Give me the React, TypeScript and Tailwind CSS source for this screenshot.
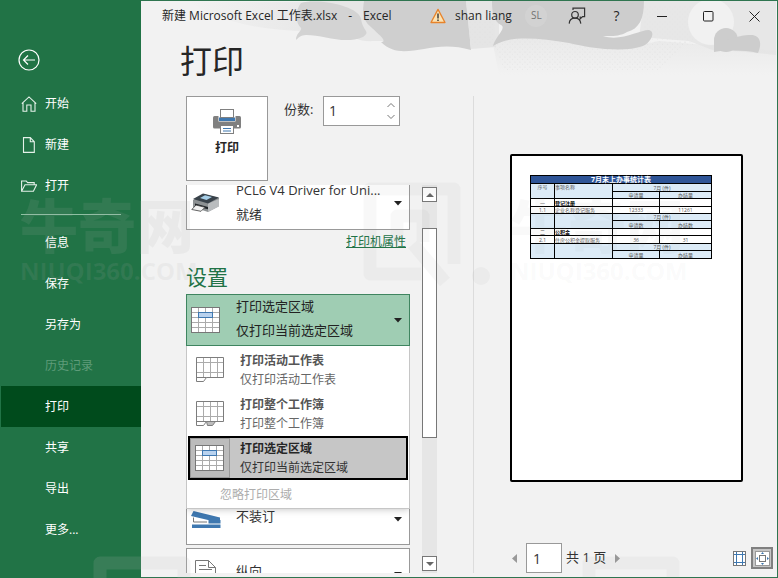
import React from "react";

const FONT = "font-['Open_Sans','Noto_Sans_CJK_SC',sans-serif]";

function HomeIcon() {
  return (
    <svg width="16" height="16" viewBox="0 0 16 16" fill="none" stroke="#e4f1e9" strokeWidth="1.1">
      <path d="M0.8 7.6 8 0.9l7.2 6.7M2 6.6v8.6h3.8V9h4.2v6.2H14V6.6" />
    </svg>
  );
}

function FileIcon() {
  return (
    <svg width="16" height="16" viewBox="0 0 16 16" fill="none" stroke="#e4f1e9" strokeWidth="1.1">
      <path d="M2.5.6h6.8l4 4.2v10.6H2.5zM9.3.6v4.2h4" />
    </svg>
  );
}

function FolderIcon() {
  return (
    <svg width="16" height="16" viewBox="0 0 16 16" fill="none" stroke="#e4f1e9" strokeWidth="1.1">
      <path d="M.6 13.2V3h4.6l1.4 1.6h6.6v2.2M.6 13.2 4 6.8h11.6l-3.2 6.4z" />
    </svg>
  );
}

function NavItem({ label, icon, active, disabled }: { label: string; icon?: React.ReactNode; active?: boolean; disabled?: boolean }) {
  const tone = active ? "bg-[#004b1c] text-white" : disabled ? "text-[#5f9c7a]" : "text-white";
  return (
    <button type="button" disabled={disabled} className={`flex h-[41px] w-full items-center pl-5 text-xs ${tone}`}>
      <span className="mr-2 flex w-4 justify-center">{icon}</span>
      {label}
    </button>
  );
}

function Sidebar() {
  return (
    <nav className="flex w-[141px] shrink-0 flex-col bg-[#217346] pt-px pl-px">
      <div className="flex h-[82px] items-end pb-3 pl-4">
        <button type="button" aria-label="返回">
          <svg width="23" height="22" viewBox="-1 0 23 22" fill="none" stroke="#fff" strokeWidth="1.2">
            <circle cx="11" cy="11" r="10" />
            <path d="M17 11H5.5M10 6.5 5.5 11l4.5 4.5" />
          </svg>
        </button>
      </div>
      <NavItem label="开始" icon={<HomeIcon />} />
      <NavItem label="新建" icon={<FileIcon />} />
      <NavItem label="打开" icon={<FolderIcon />} />
      <div className="flex h-4 items-center pr-5 pl-5">
        <hr className="w-full border-[#8fc0a3]" />
      </div>
      <NavItem label="信息" />
      <NavItem label="保存" />
      <NavItem label="另存为" />
      <NavItem label="历史记录" disabled />
      <NavItem label="打印" active />
      <NavItem label="共享" />
      <NavItem label="导出" />
      <NavItem label="更多..." />
    </nav>
  );
}

function HeaderArt() {
  return (
    <svg className="pointer-events-none absolute top-0 right-0" width="637" height="80" viewBox="141 0 637 80" aria-hidden="true">
      <defs>
        <pattern id="dots" width="5" height="5" patternUnits="userSpaceOnUse">
          <circle cx="1" cy="1" r="0.6" fill="#dadada" />
          <circle cx="3.5" cy="3.2" r="0.5" fill="#e0e0e0" />
        </pattern>
        <linearGradient id="fade" x1="0" y1="0" x2="0" y2="1">
          <stop offset="0" stopColor="#e3e3e3" />
          <stop offset="1" stopColor="#f2f2f2" />
        </linearGradient>
        <linearGradient id="side" x1="0" y1="0" x2="1" y2="0">
          <stop offset="0" stopColor="#f2f2f2" />
          <stop offset="1" stopColor="#dedede" />
        </linearGradient>
      </defs>
      <path d="M190 1H310V30C260 30 220 20 190 1z" fill="url(#side)" opacity=".5" />
      <path d="M310 0H500V40H375C350 42 340 25 310 0z" fill="#e6e6e6" />
      <path d="M302 2C320-3 360 5 362 18S372 30 364 36C345 44 325 34 307 34 302 34 299 37 297 39 297 32 303 30 302 27 295 20 297 8 302 2z" fill="#d3d3d3" />
      <path d="M365 0H467L472 49C455 44 440 45 425 48 410 50 395 54 382 41 390 41 378 32 372 26 362 18 364 8 365 0z" fill="#cfcfcf" />
      <path d="M493 38C540 30 610 54 660 40L777 50V74H500z" fill="url(#fade)" opacity=".6" />
      <path d="M467 0h27l3 46-25 2z" fill="#e5e5e5" />
      <path d="M493 38C520 30 600 50 690 40L660 70H505z" fill="url(#dots)" opacity=".7" />
      <path d="M470 10h25v34h-25zM645 4h50v40h-50z" fill="url(#dots)" opacity=".5" />
      <path d="M645 0H777V54C755 52 735 49 716 50L690 40 640 36z" fill="#e4e4e4" opacity=".8" />
      <path d="M493 0H645C645 18 640 28 628 31 620 36 610 35 604 35 622 41 640 29 650 29 657 31 652 41 644 45 625 52 590 47 570 42 540 37 510 34 494 45 496 36 508 27 502 24 494 20 493 10 493 0z" fill="#cdcdcd" />
      <circle cx="712" cy="21" r="23" fill="#f1f1f1" />
      <circle cx="727" cy="39" r="12" fill="#cdcdcd" />
      <path d="M715 39C738 40 735 34 752 34 762 34 763 44 759 52 745 49 728 49 715 51z" fill="#cdcdcd" />
      <circle cx="537" cy="15" r="11" fill="#d2d2d2" />
    </svg>
  );
}

function TitleBar() {
  return (
    <header className="relative flex h-[30px] shrink-0 items-center text-xs text-[#262626]">
      <HeaderArt />
      <div className="relative flex flex-1 gap-[11px] pl-[21px] whitespace-nowrap">
        <span>新建 Microsoft Excel 工作表.xlsx</span>
        <span>-</span>
        <span>Excel</span>
      </div>
      <div className="relative flex items-center">
        <svg width="16" height="16" viewBox="0 0 16 16" className="mr-[9px]" aria-hidden="true">
          <path d="M8 1.4 15 14.5H1z" fill="#fbe3b4" stroke="#e8832a" strokeWidth="1.3" strokeLinejoin="round" />
          <path d="M8 5.4v5M8 11.5v1.5" stroke="#333" strokeWidth="1.4" />
        </svg>
        <span className="w-[76px]">shan liang</span>
        <span className="w-[36px] text-[10px] text-[#737373]">SL</span>
        <button type="button" aria-label="反馈" className="mr-[13px] flex w-[20px] justify-center">
          <svg width="18" height="18" viewBox="0 0 18 18" fill="none" stroke="#333" strokeWidth="1.2">
            <circle cx="7" cy="7.8" r="3.3" />
            <path d="M1.2 16.6c.2-3.4 2.4-5.4 5.8-5.4s5.4 2 5.8 5.4M5 3V1.200h11.600v8.400h-2l-2.400 2.200V9.600" />
          </svg>
        </button>
        <button type="button" aria-label="帮助" className="w-[33px] text-sm">?</button>
        <button type="button" aria-label="最小化" className="flex w-[46px] justify-center pl-3">
          <svg width="10" height="10" stroke="#222"><path d="M0 5.5h10" /></svg>
        </button>
        <button type="button" aria-label="最大化" className="flex w-[46px] justify-center pl-3">
          <svg width="11" height="11" stroke="#222" fill="none"><rect x=".5" y=".5" width="9.5" height="9.5" rx="1" /></svg>
        </button>
        <button type="button" aria-label="关闭" className="mr-[17px] flex w-[35px] justify-end">
          <svg width="11" height="11" stroke="#222"><path d="M.5.5l10 10M10.5.5l-10 10" /></svg>
        </button>
      </div>
    </header>
  );
}

function PrintIcon() {
  return (
    <svg width="28" height="26" viewBox="0 0 28 26" aria-hidden="true">
      <rect x="0" y="7" width="28" height="12.5" rx="1.5" fill="#808080" />
      <rect x="5.5" y="7" width="17" height="5.5" fill="#fff" />
      <rect x="6" y="8.5" width="16" height="3.5" fill="#3f78b0" />
      <rect x="7.5" y=".5" width="13" height="8" fill="#fff" stroke="#808080" />
      <rect x="7.5" y="16.5" width="13" height="8" fill="#fff" stroke="#808080" />
      <path d="M10 19.5h8M10 22h8" stroke="#3f78b0" />
      <rect x="24" y="16" width="2" height="2" fill="#fff" />
    </svg>
  );
}

function DeviceIcon() {
  return (
    <svg width="30" height="22" viewBox="0 0 30 22" aria-hidden="true">
      <path d="M2 8 13 2l15 4v8L17 20 2 15z" fill="#8d9193" />
      <path d="M17 11.5 28 7v7.5L17 20z" fill="#b9bcbe" />
      <path d="M2 7 12 1.5 28 5.5 17 11.5z" fill="#39424a" />
      <path d="M9 6 14 3.2l7 1.8-5.5 3z" fill="#a7cfe8" />
      <path d="M4 11.5 17 15v2.2L4 14z" fill="#1d2226" />
      <path d="M.8 17.5 5 13l9 2.3-4 4z" fill="#f2f2f2" stroke="#3c3c3c" strokeWidth=".8" />
    </svg>
  );
}

function SelectionIcon() {
  return (
    <svg width="30" height="26" viewBox="0 0 30 26" aria-hidden="true">
      <rect x=".5" y=".5" width="28" height="25" fill="#fff" />
      <path d="M7.5 0v26M14.5 0v26M21.5 0v26M0 5.5h29M0 10.5h29M0 15.5h29M0 20.5h29" stroke="#ababab" />
      <rect x=".5" y=".5" width="28" height="25" fill="none" stroke="#777" />
      <rect x="7.5" y="5.5" width="14" height="5" fill="#b9d2ee" stroke="#3f78b0" />
    </svg>
  );
}

function SheetIcon({ all }: { all?: boolean }) {
  return (
    <svg width="30" height="26" viewBox="-1 0 30 26" fill="none" stroke="#7d7d7d" aria-hidden="true">
      <path d="M7.5 1v20M14.5 1v20M21.5 1v20M1 5.5h27M1 15.5h27" stroke="#ababab" />
      <path d="M10.5 20.500H27.500V.5H.5v24h7l3-4H.5" />
      {all && <path d="M10.500 20.500h9l-3 4h-5z" fill="#bcbcbc" />}
    </svg>
  );
}

function StapleIcon() {
  return (
    <svg width="30" height="17" viewBox="0 0 30 17" aria-hidden="true">
      <path d="M2.5 0 29 6.5V9H17L0 5z" fill="#3f78b0" />
      <path d="M2.5 6.5V11H16" stroke="#777" fill="none" />
      <rect x="17.5" y="9" width="12" height="3.5" fill="#3f78b0" />
      <path d="M1 13.5h28.5V17H1z" fill="#3f78b0" />
    </svg>
  );
}

function PortraitIcon() {
  return (
    <svg width="22" height="28" viewBox="0 0 22 28" fill="none" stroke="#777" aria-hidden="true">
      <path d="M.5.5h13l7 7v20H.5zM13.5.5v7h7" fill="#fff" />
      <path d="M4 5.5h7M4 9.5h13M4 13.5h13M4 17.5h13" />
    </svg>
  );
}

function Caret() {
  return (
    <svg width="8" height="5" viewBox="0 0 8 5" fill="#222" aria-hidden="true">
      <path d="M0 0h8L4 4.5z" />
    </svg>
  );
}

function SettingSelect({ label, value, icon, className }: { label: string; value: string; icon: React.ReactNode; className: string }) {
  return (
    <div className={`relative h-[52px] shrink-0 border border-[#999] bg-white ${className}`}>
      <select aria-label={label} className="h-full w-full appearance-none bg-transparent pb-1 pl-[49px] text-[13px] text-[#333]">
        <option>{value}</option>
      </select>
      <span className="pointer-events-none absolute inset-y-0 left-1 flex items-center">{icon}</span>
      <span className="pointer-events-none absolute inset-y-0 right-[7px] flex items-center"><Caret /></span>
    </div>
  );
}

function MenuItem({ title, note, icon, selected }: { title: string; note: string; icon: React.ReactNode; selected?: boolean }) {
  return (
    <button
      type="button"
      role="option"
      aria-selected={!!selected}
      className={`flex h-11 w-full items-center border-2 text-left text-xs ${selected ? "border-black bg-[#c6c6c6]" : "border-transparent"}`}
    >
      <span className={`flex h-10 w-[40px] items-center justify-center border ${selected ? "border-[#999] bg-[#bcbcbc]" : "border-transparent"}`}>{icon}</span>
      <span className="flex flex-col pl-[10px]">
        <span className={`leading-5 font-bold ${selected ? "text-[#262626]" : "text-[#555]"}`}>{title}</span>
        <span className={`leading-[18px] ${selected ? "text-[#333]" : "text-[#666]"}`}>{note}</span>
      </span>
    </button>
  );
}

function ScrollBar() {
  return (
    <div className="ml-3 flex w-[15px] flex-col bg-[#e6e6e6] pt-0.5">
      <button type="button" aria-label="向上滚动" className="flex h-[15px] items-center justify-center border border-[#777] bg-white">
        <svg width="8" height="4" fill="#666"><path d="M0 4h8L4 0z" /></svg>
      </button>
      <div className="mt-[26px] h-[210px] border border-[#777] bg-white" />
      <div className="flex-1" />
      <button type="button" aria-label="向下滚动" className="mb-0.5 flex h-[15px] items-center justify-center border border-[#777] bg-white">
        <svg width="8" height="4" fill="#666"><path d="M0 0h8L4 4z" /></svg>
      </button>
    </div>
  );
}

function SettingsPane() {
  return (
    <section className="flex w-[332px] shrink-0 flex-col pl-[45px]">
      <div className="flex items-start">
        <button type="button" className="flex h-[85px] w-[82px] flex-col items-center border border-[#999] bg-white pt-3 text-xs font-bold text-[#262626]">
          <PrintIcon />
          <span className="mt-[3px] leading-5">打印</span>
        </button>
        <label htmlFor="copies" className="ml-4 w-[39px] pt-[3px] text-[13px] leading-5 whitespace-nowrap text-[#333]">份数:</label>
        <div className="flex h-[30px] w-[77px] border border-[#999] bg-white">
          <input id="copies" defaultValue="1" className="min-w-0 flex-1 bg-transparent pl-[5px] text-sm text-[#333] outline-none" />
          <div className="flex w-4 flex-col items-center justify-between py-[6px] text-[#777]">
            <button type="button" aria-label="增加"><svg className="block" width="8" height="4" fill="none" stroke="currentColor"><path d="M.5 4 4 .5 7.5 4" /></svg></button>
            <button type="button" aria-label="减少"><svg className="block" width="8" height="4" fill="none" stroke="currentColor"><path d="M.5 0 4 3.5 7.5 0" /></svg></button>
          </div>
        </div>
      </div>

      <div className="mt-1 flex min-h-0 flex-1 overflow-hidden">
        <div className="flex w-[224px] flex-col overflow-hidden">
          <button type="button" aria-haspopup="listbox" className="flex h-[45px] shrink-0 items-end overflow-hidden border border-t-0 border-[#999] bg-white pr-[7px] pb-[3px] pl-1 text-left text-[13px] text-[#333]">
            <span className="mb-3 w-[45px]"><DeviceIcon /></span>
            <span className="flex flex-1 flex-col leading-6 whitespace-nowrap">
              <span>PCL6 V4 Driver for Uni...</span>
              <span>就绪</span>
            </span>
            <span className="mb-5"><Caret /></span>
          </button>
          <a href="#properties" className="mt-[2px] mr-1 self-end text-xs leading-5 text-[#217346] underline">打印机属性</a>
          <h2 className="mt-[9px] text-[21px] leading-8 text-[#217346]">设置</h2>
          <div className="relative z-10 mt-[1px]">
            <button type="button" aria-haspopup="listbox" aria-expanded="true" className="flex h-[52px] w-full items-center border border-[#3f8560] bg-[#9fcdb3] pr-[7px] pl-1 text-left text-[13px] text-[#222]">
              <span className="w-[45px]"><SelectionIcon /></span>
              <span className="flex flex-1 flex-col pb-1 leading-6">
                <span>打印选定区域</span>
                <span>仅打印当前选定区域</span>
              </span>
              <Caret />
            </button>
            <div role="listbox" aria-label="打印范围" className="absolute inset-x-0 top-full border border-t-0 border-[#c6c6c6] bg-white px-px pt-0.5 shadow-md">
              <MenuItem title="打印活动工作表" note="仅打印活动工作表" icon={<SheetIcon />} />
              <MenuItem title="打印整个工作簿" note="打印整个工作簿" icon={<SheetIcon all />} />
              <MenuItem title="打印选定区域" note="仅打印当前选定区域" icon={<SelectionIcon />} selected />
              <button type="button" disabled className="h-7 w-full pt-px pl-8 text-left text-xs text-[#adadad]">忽略打印区域</button>
            </div>
          </div>
          <SettingSelect label="装订" value="不装订" icon={<StapleIcon />} className="mt-[147px]" />
          <SettingSelect label="方向" value="纵向" icon={<span className="pl-1"><PortraitIcon /></span>} className="mt-[3px]" />
        </div>
        <ScrollBar />
      </div>
    </section>
  );
}

const cell = "overflow-hidden border border-black p-0 text-center whitespace-nowrap";
const blue = "bg-[#dcebf7]";

function Units({ kind }: { kind: string }) {
  return (
    <>
      <td className={`${cell} ${blue}`}>申请{kind}</td>
      <td className={`${cell} ${blue}`}>办结{kind}</td>
    </>
  );
}

function SheetTable() {
  return (
    <table className="w-full table-fixed border-collapse text-[5px] leading-[6px] text-[#555]">
      <colgroup>
        <col className="w-[24px]" />
        <col className="w-[58px]" />
        <col className="w-[47px]" />
        <col />
      </colgroup>
      <tbody>
        <tr className="h-2"><th colSpan={4} className="border border-black bg-[#2f5597] p-0 text-[7px] leading-[7px] font-bold text-white">7月末上办事统计表</th></tr>
        <tr className="h-2">
          <td rowSpan={2} className={`${cell} ${blue} align-top`}>序号</td>
          <td rowSpan={2} className={`${cell} ${blue} text-left align-top`}>事项名称</td>
          <td colSpan={2} className={`${cell} ${blue}`}>7月 (件)</td>
        </tr>
        <tr className="h-[7px]"><Units kind="量" /></tr>
        <tr className="h-2"><td className={cell}>一</td><td className={`${cell} text-left font-bold text-black`}>登记注册</td><td className={cell} /><td className={cell} /></tr>
        <tr className="h-[7px]"><td className={cell}>1.1</td><td className={`${cell} text-left`}>企业名称登记服务</td><td className={cell}>12333</td><td className={cell}>11261</td></tr>
        <tr className="h-[7px]"><td rowSpan={2} className={`${cell} ${blue}`} /><td rowSpan={2} className={`${cell} ${blue}`} /><td colSpan={2} className={`${cell} ${blue}`}>7月 (件)</td></tr>
        <tr className="h-2"><Units kind="数" /></tr>
        <tr className="h-[7px]"><td className={cell}>二</td><td className={`${cell} text-left font-bold text-black`}>公积金</td><td className={cell} /><td className={cell} /></tr>
        <tr className="h-2"><td className={cell}>2.1</td><td className={`${cell} text-left`}>住房公积金提取服务</td><td className={cell}>36</td><td className={cell}>31</td></tr>
        <tr className="h-[7px]"><td rowSpan={2} className={`${cell} ${blue}`} /><td rowSpan={2} className={`${cell} ${blue}`} /><td colSpan={2} className={`${cell} ${blue}`}>7月 (件)</td></tr>
        <tr className="h-2"><Units kind="量" /></tr>
      </tbody>
    </table>
  );
}

function Preview() {
  return (
    <section className="flex min-w-0 flex-1 flex-col border-l border-[#dcdcdc]">
      <div className="flex flex-1 justify-center pt-[58px] pl-[2px]">
        <div className="h-[328px] w-[233px] rounded-[2px] border-2 border-black bg-white pt-[19px] pr-[29px] pl-[18px]">
          <SheetTable />
        </div>
      </div>
      <div className="flex h-[30px] items-center pr-1 pl-[38px] text-[13px] text-[#333]">
        <button type="button" aria-label="上一页"><svg width="5" height="9" fill="#999"><path d="M5 0v9L0 4.5z" /></svg></button>
        <input aria-label="当前页" defaultValue="1" className="mr-1 ml-[9px] h-[30px] w-9 border border-[#999] bg-white pl-[6px] text-sm" />
        <span className="pb-px whitespace-nowrap">共 1 页</span>
        <button type="button" aria-label="下一页" className="ml-[9px]"><svg width="5" height="9" fill="#999"><path d="M0 0v9l5-4.5z" /></svg></button>
        <div className="flex-1" />
        <button type="button" aria-label="显示边距" className="mr-[5px]">
          <svg width="13" height="15" viewBox="0 0 13 15" fill="none">
            <rect x=".5" y=".5" width="12" height="14" fill="#fff" stroke="#777" />
            <path d="M3.5 1v13M9.5 1v13M1 3.5h11M1 11.5h11" stroke="#3f78b0" />
          </svg>
        </button>
        <button type="button" aria-label="缩放到页面" className="flex h-[22px] w-[22px] items-center justify-center border-2 border-[#808080] bg-[#c6c6c6]">
          <svg width="15" height="15" viewBox="0 0 15 15">
            <rect x=".5" y=".5" width="14" height="14" fill="#fff" stroke="#999" />
            <rect x="4.5" y="4.5" width="6" height="6" fill="#fff" stroke="#777" />
            <path d="M7.5 1 9 3H6zM7.5 14 9 12H6zM1 7.5 3 6v3zM14 7.5 12 6v3z" fill="#3f78b0" />
          </svg>
        </button>
      </div>
    </section>
  );
}

function Mark({ className }: { className: string }) {
  return (
    <div className={`absolute whitespace-nowrap ${className}`}>
      <div className="text-[58px] leading-[60px] font-black">牛奇网</div>
      <div className="text-[24px] leading-[30px] font-bold">NIUQI360.COM</div>
    </div>
  );
}

function MarkLogo({ className }: { className: string }) {
  return (
    <svg className={`absolute ${className}`} width="130" height="110" viewBox="0 0 130 110" fill="none" stroke="currentColor" strokeWidth="13" strokeLinejoin="round">
      <path d="M60 92H9V7H93V82M36 60V34H62V60M52 62 84 100" />
      <circle cx="120" cy="94" r="9" fill="currentColor" stroke="none" />
    </svg>
  );
}

function Watermarks() {
  return (
    <div className="pointer-events-none absolute inset-0 z-20 overflow-hidden" aria-hidden="true">
      <Mark className="top-[196px] left-5 text-[#aaa]/12" />
      <Mark className="top-[196px] left-[510px] text-[#888]/5" />
      <MarkLogo className="top-[182px] left-[361px] text-[#888]/6" />
      <MarkLogo className="top-[556px] left-[91px] text-[#bbb]/15" />
      <MarkLogo className="top-[556px] left-[580px] text-[#888]/6" />
    </div>
  );
}

export default function App() {
  return (
    <div className={`relative flex h-screen overflow-hidden bg-[#f2f2f2] ${FONT}`}>
      <Sidebar />
      <main className="flex min-w-0 flex-1 flex-col border-y border-r border-[#2f7550]">
        <TitleBar />
        <h1 className="relative h-[65px] pl-[39px] text-[32px] leading-[60px] text-[#262626]">打印</h1>
        <div className="flex min-h-0 flex-1 pb-1">
          <SettingsPane />
          <Preview />
        </div>
      </main>
      <Watermarks />
    </div>
  );
}
